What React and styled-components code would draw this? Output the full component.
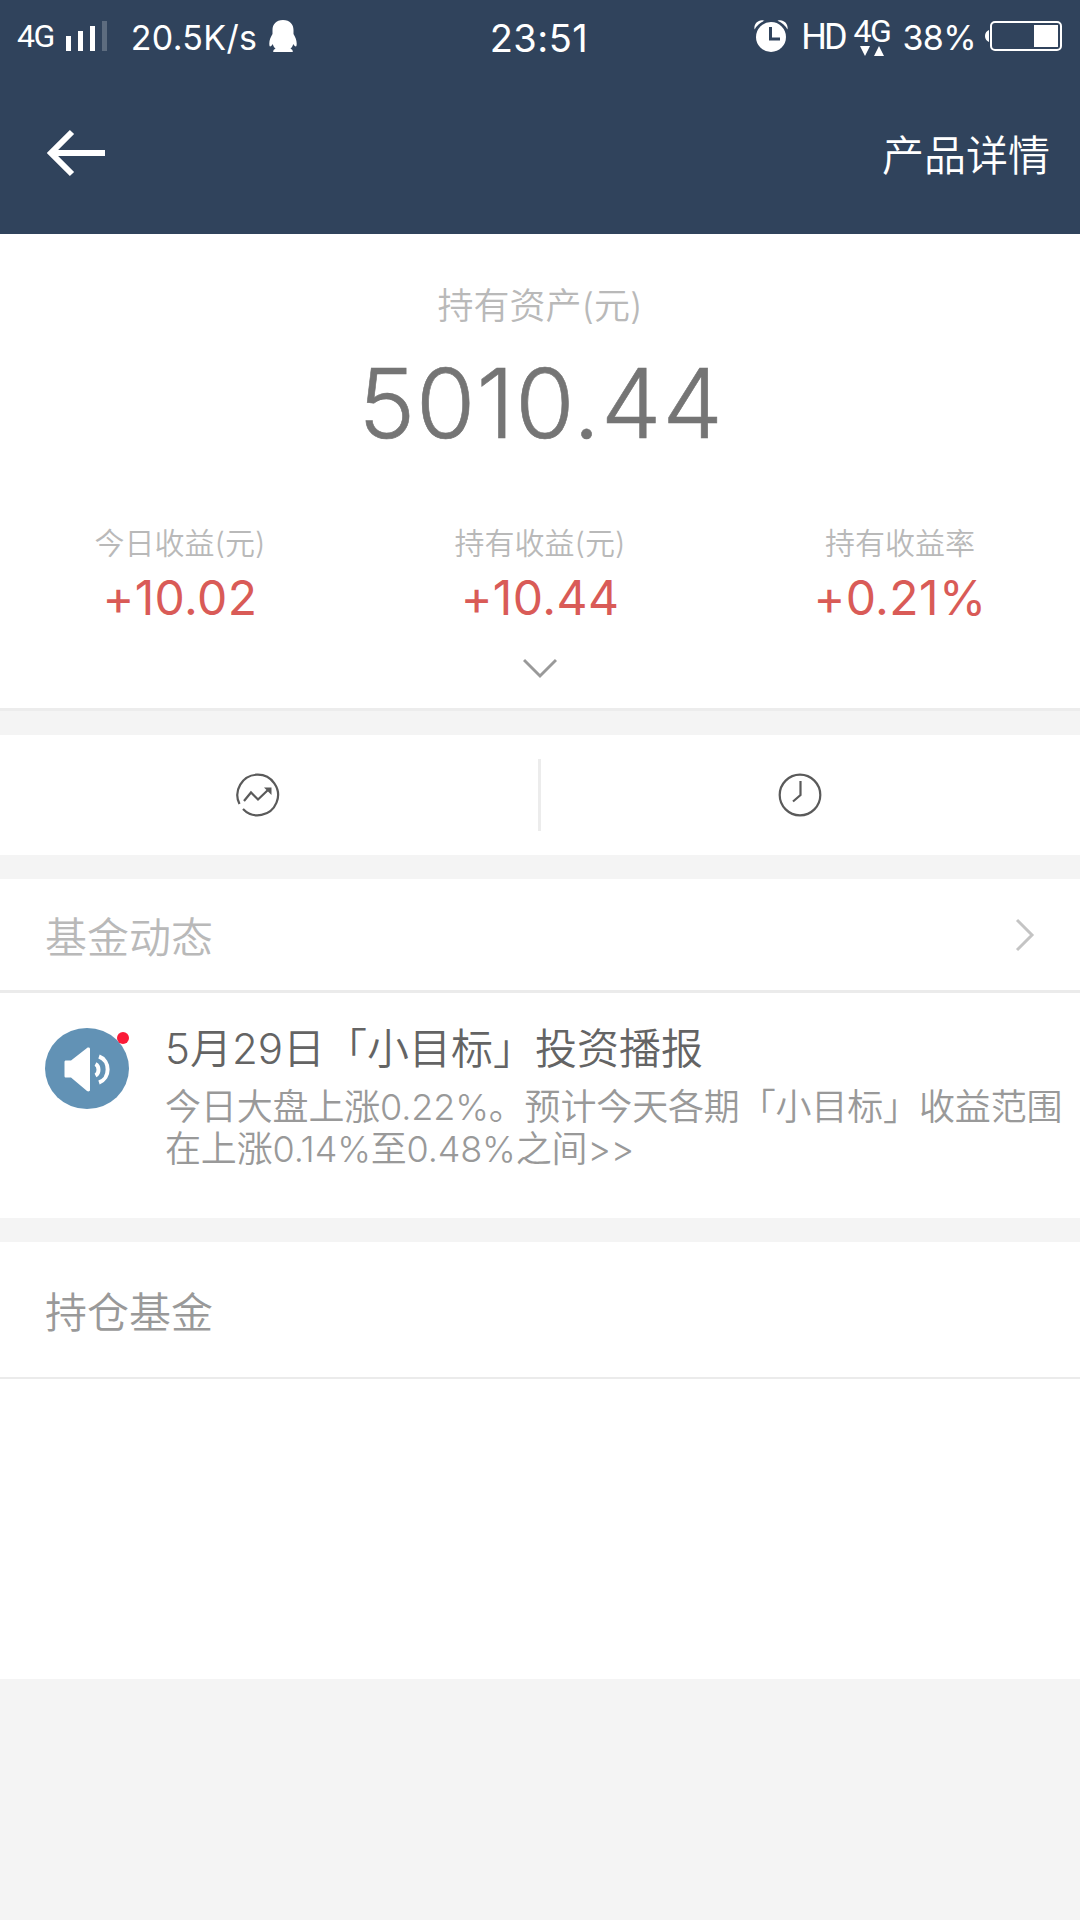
import React from 'react';
import styled, { createGlobalStyle } from 'styled-components';

const GlobalStyle = createGlobalStyle`
  * {
    box-sizing: border-box;
  }

  body {
    margin: 0;
    background: #f4f4f4;
    font-family: Inter, 'Noto Sans CJK SC', sans-serif;
    font-weight: 350;
  }
`;

const Page = styled.div`
  width: 1080px;
  min-height: 1920px;
  background: #f4f4f4;
`;

const Header = styled.header`
  height: 234px;
  background: #30435c;
  color: #fff;
`;

const StatusBar = styled.div`
  display: grid;
  grid-template-columns: 1fr auto 1fr;
  height: 72px;
  padding: 0 17px;
`;

const StatusGroup = styled.div`
  display: flex;
  align-items: flex-start;
  justify-content: ${(props) => (props.$end ? 'flex-end' : 'flex-start')};
`;

const StatusText = styled.span`
  margin: ${(props) => props.$top}px 0 0 ${(props) => props.$left || 0}px;
  font-size: ${(props) => props.$size || 34}px;
  font-weight: 400;
  line-height: 40px;
  letter-spacing: ${(props) => props.$spacing || 0}px;
  white-space: nowrap;
`;

const Clock = styled(StatusText)`
  margin-right: 2px;
`;

const NarrowText = styled(StatusText)`
  font-family: Roboto, sans-serif;
`;

const StatusIcon = styled.svg`
  flex: none;
  margin: ${(props) => props.$top}px 0 0 ${(props) => props.$left || 0}px;
`;

const Network = styled.div`
  display: flex;
  flex-direction: column;
  align-items: center;
  margin-left: 9px;

  svg {
    margin-top: -5px;
  }
`;

const TitleBar = styled.div`
  display: flex;
  align-items: center;
  justify-content: space-between;
  height: 162px;
  padding: 0 30px 0 46px;
`;

const Title = styled.h1`
  margin: 6px 0 0;
  font-size: 42px;
  font-weight: 350;
  line-height: 60px;
`;

const Summary = styled.section`
  display: flex;
  flex-direction: column;
  align-items: center;
  height: 477px;
  padding-top: 47px;
  background: #fff;
  border-bottom: 3px solid #ececec;
`;

const Label = styled.div`
  color: #b9b9b9;
  font-size: ${(props) => props.$size}px;
  line-height: 50px;
`;

const Total = styled.div`
  margin-top: 12px;
  padding-left: 2px;
  color: #757575;
  font-size: 96px;
  line-height: 120px;
  letter-spacing: 1px;
  -webkit-text-stroke: 0.6px #757575;
`;

const Stats = styled.div`
  display: grid;
  grid-template-columns: repeat(3, 1fr);
  width: 100%;
  margin: 55px 0 30px;
`;

const Stat = styled.div`
  text-align: center;
`;

const Gain = styled.div`
  color: #d95b57;
  font-size: 48px;
  font-weight: 400;
  line-height: 60px;
  letter-spacing: 0.4px;
`;

const Actions = styled.section`
  display: grid;
  grid-template-columns: 538px 3px 1fr;
  align-items: center;
  height: 120px;
  margin-top: 24px;
  background: #fff;
`;

const Action = styled.div`
  display: flex;
  justify-content: center;
  padding-right: 22px;
`;

const Divider = styled.span`
  width: 3px;
  height: 72px;
  background: #ececec;
`;

const Section = styled.section`
  margin-top: 24px;
  background: #fff;
`;

const SectionHead = styled.div`
  display: flex;
  align-items: center;
  justify-content: space-between;
  height: ${(props) => props.$height}px;
  padding: 0 45px;
  border-bottom: ${(props) => props.$line}px solid #ebebeb;
  color: ${(props) => props.$color};
  font-size: 42px;
`;

const News = styled.article`
  display: flex;
  height: 225px;
  padding: 35px 0 0 45px;
`;

const Avatar = styled.div`
  position: relative;
  width: 84px;
  height: 81px;
`;

const Dot = styled.span`
  position: absolute;
  top: 4px;
  right: 0;
  width: 12px;
  height: 12px;
  border-radius: 50%;
  background: #fb1a37;
`;

const NewsBody = styled.div`
  margin: -9px 0 0 36px;
  white-space: nowrap;
`;

const NewsTitle = styled.div`
  color: #646464;
  font-size: 42px;
  line-height: 60px;
`;

const NewsText = styled.div`
  margin-top: 7px;
  color: #999;
  font-size: 36px;
  line-height: 42px;
  letter-spacing: -0.15px;
`;

const Holdings = styled.div`
  height: 300px;
`;

const stats = [
  { label: '今日收益(元)', value: '+10.02' },
  { label: '持有收益(元)', value: '+10.44' },
  { label: '持有收益率', value: '+0.21%' },
];

const SignalIcon = () => (
  <StatusIcon $top={21} $left={12} width="42" height="30" fill="#fff">
    <path d="M0 15h5v15H0zM12 10h5v20h-5zM24 5h5v25h-5z" />
    <path d="M36 0h5v30h-5z" opacity=".22" />
  </StatusIcon>
);

const PenguinIcon = () => (
  <StatusIcon $top={20} $left={12} width="28" height="32" viewBox="0 0 28 32" fill="#fff">
    <path d="M14 0C7 0 3.500 4.500 3.500 10v4C1.800 17 .3 20 .3 23.500c0 2 .3 3 .8 3 .8 0 1.900-1 2.700-2.500.5 2 1.400 3.500 2.700 4.800-1.500.6-2.300 1.300-2.300 3.200h19.600c0-1.900-.8-2.600-2.300-3.200 1.300-1.300 2.200-2.800 2.700-4.800.8 1.500 1.900 2.500 2.700 2.500.5 0 .8-1 .8-3 0-3.500-1.500-6.500-3.200-9.500v-4C24.500 4.500 21 0 14 0z" />
  </StatusIcon>
);

const AlarmIcon = () => (
  <StatusIcon $top={20} width="34" height="32" viewBox="0 0 34 32" fill="#fff">
    <circle cx="17" cy="17" r="15" />
    <path d="M.6 9.500C-.8 4.500 4.500-1.500 10.500.8A19 19 0 0 0 .6 9.500zM33.400 9.500C34.800 4.500 29.500-1.500 23.500.8a19 19 0 0 1 9.900 8.700z" />
    <path d="M16.500 7v12h9.500" fill="none" stroke="#30435c" strokeWidth="3" />
  </StatusIcon>
);

const BatteryIcon = () => (
  <StatusIcon $top={21} $left={9} width="78" height="30" viewBox="0 0 78 30" fill="#fff">
    <path d="M4 9v12C1.500 20 0 18 0 15s1.500-5 4-6z" />
    <rect x="6" y="1" width="70" height="28" rx="4" fill="none" stroke="#fff" strokeWidth="2" />
    <path d="M49 4h24v22H49z" />
  </StatusIcon>
);

const BackIcon = () => (
  <svg width="60" height="48" viewBox="0 0 60 48" fill="none" stroke="#fff" strokeWidth="6">
    <path d="M26 3L5 24l21 21M5 24h54" />
  </svg>
);

const TrendIcon = () => (
  <svg width="44" height="44" viewBox="0 0 44 44" fill="none" stroke="#5a5a5a" strokeWidth="2.200">
    <path d="M3.500 31A20.300 20.300 0 1 1 7 36" />
    <path d="M8 28l7-8.500 7 7L33 16" />
    <path d="M28 14.500h7.500V22z" fill="#5a5a5a" stroke="none" />
  </svg>
);

const ClockIcon = () => (
  <svg width="44" height="44" viewBox="0 0 44 44" fill="none" stroke="#5a5a5a" strokeWidth="2.200">
    <circle cx="22" cy="22" r="20.300" />
    <path d="M22.500 8v14L15 28.500" />
  </svg>
);

const SpeakerIcon = () => (
  <svg width="84" height="81" viewBox="0 0 84 81" fill="#fff">
    <ellipse cx="42" cy="40.500" rx="42" ry="40.500" fill="#6292b5" />
    <path d="M21 32.500h5L42 20c1-.8 3-.5 3 1v41c0 1.500-2 1.800-3 1L26 49.500h-5c-1 0-1.500-.5-1.500-1.500V34c0-1 .5-1.500 1.500-1.500z" />
    <path d="M50.500 36c4 2 4 9.500 0 11.500M54 28.500c11.500 4 11.500 22 0 26" fill="none" stroke="#fff" strokeWidth="4" />
  </svg>
);

const App = () => (
  <>
    <GlobalStyle />
    <Page>
      <Header>
        <StatusBar>
          <StatusGroup>
            <NarrowText $top={16} $size={32} $spacing={-1.5}>4G</NarrowText>
            <SignalIcon />
            <StatusText $top={18} $left={23} $spacing={0.3}>20.5K/s</StatusText>
            <PenguinIcon />
          </StatusGroup>
          <Clock $top={18} $size={38} $spacing={0.5}>23:51</Clock>
          <StatusGroup $end>
            <AlarmIcon />
            <NarrowText $top={17} $left={13} $size={36} $spacing={-3}>HD</NarrowText>
            <Network>
              <NarrowText $top={11} $size={32} $spacing={-1.5}>4G</NarrowText>
              <svg width="26" height="10" fill="#fff">
                <path d="M1 0h10L6 10zM15 10h10L20 0z" />
              </svg>
            </Network>
            <StatusText $top={18} $left={12} $spacing={-0.6}>38%</StatusText>
            <BatteryIcon />
          </StatusGroup>
        </StatusBar>
        <TitleBar>
          <BackIcon />
          <Title>产品详情</Title>
        </TitleBar>
      </Header>

      <Summary>
        <Label $size={36}>持有资产(元)</Label>
        <Total>5010.44</Total>
        <Stats>
          {stats.map(({ label, value }) => (
            <Stat key={label}>
              <Label $size={30}>{ label }</Label>
              <Gain>{ value }</Gain>
            </Stat>
          ))}
        </Stats>
        <svg width="34" height="24" fill="none" stroke="#999" strokeWidth="3">
          <path d="M1 2l16 16L33 2" />
        </svg>
      </Summary>

      <Actions>
        <Action>
          <TrendIcon />
        </Action>
        <Divider />
        <Action>
          <ClockIcon />
        </Action>
      </Actions>

      <Section>
        <SectionHead $height={114} $line={3} $color="#b9b9b9">
          基金动态
          <svg width="20" height="34" fill="none" stroke="#c4c4c4" strokeWidth="3">
            <path d="M2 2l15 15L2 32" />
          </svg>
        </SectionHead>
        <News>
          <Avatar>
            <SpeakerIcon />
            <Dot />
          </Avatar>
          <NewsBody>
            <NewsTitle>5月29日「小目标」投资播报</NewsTitle>
            <NewsText>
              今日大盘上涨0.22%。预计今天各期「小目标」收益范围
              <br />
              在上涨0.14%至0.48%之间&gt;&gt;
            </NewsText>
          </NewsBody>
        </News>
      </Section>

      <Section>
        <SectionHead $height={137} $line={2} $color="#999">持仓基金</SectionHead>
        <Holdings />
      </Section>
    </Page>
  </>
);

export default App;
